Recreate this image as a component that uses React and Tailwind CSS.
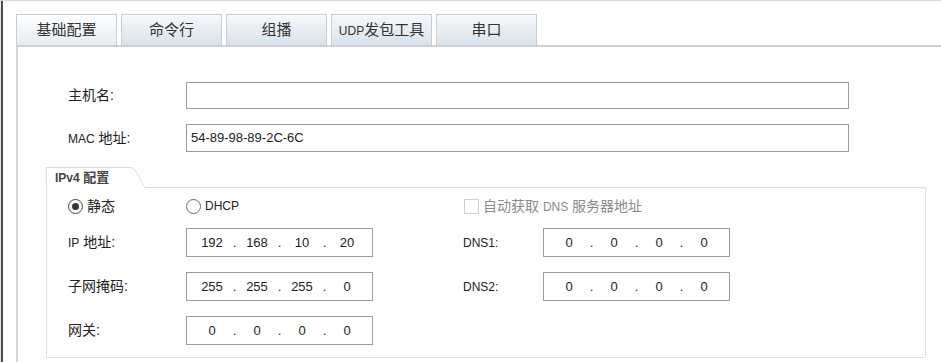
import React from "react";

const tabs = ["基础配置", "命令行", "组播", "UDP发包工具", "串口"];

function Tab({ label, active }) {
  return (
    <div
      className={`w-[101px] h-[31px] flex items-center justify-center border border-b-0 border-[#c7cdd3] text-[15px] text-[#333] bg-gradient-to-b ${
        active ? "from-white to-[#e6ecf1]" : "from-[#f6f8fa] to-[#d9e2ea]"
      }`}
    >
      {label === "UDP发包工具" ? (
        <span>
          <span className="text-[12px]">UDP</span>发包工具
        </span>
      ) : (
        label
      )}
    </div>
  );
}

function IpBox({ parts }) {
  return (
    <div className="w-[187px] h-[29px] border border-[#9c9c9c] flex items-center pl-[10px] text-[13px] text-[#222]">
      {parts.map((p, i) => (
        <React.Fragment key={i}>
          {i > 0 && <span className="w-[15px] text-center">.</span>}
          <span className="w-[30px] text-center">{p}</span>
        </React.Fragment>
      ))}
    </div>
  );
}

function Radio({ checked }) {
  return (
    <span
      className={`w-[15px] h-[15px] rounded-full border flex items-center justify-center bg-white ${
        checked ? "border-[#444]" : "border-[#666]"
      }`}
    >
      {checked && <span className="w-[7px] h-[7px] rounded-full bg-[#333]" />}
    </span>
  );
}

export default function App() {
  return (
    <div
      className="w-[941px] h-[362px] overflow-hidden bg-white border-t border-[#d9d9d9] flex text-[#222]"
      style={{ fontFamily: '"Liberation Sans", "Noto Sans CJK SC", sans-serif' }}
    >
      <div className="w-[1px] bg-[#e4e4e4]" />
      <div className="w-[2px] bg-[#4b4b4b]" />

      <div className="flex-1 pl-[13px] pt-[13px]">
        {/* tabs */}
        <div className="flex gap-[4px] border-b-2 border-[#d0d0d0]">
          {tabs.map((t, i) => (
            <Tab key={t} label={t} active={i === 0} />
          ))}
        </div>

        {/* panel */}
        <div className="border-l-2 border-[#d6d6d6] h-[400px] pl-[28px] pt-[35px]">
          <div className="pl-[22px]">
            <div className="flex items-center h-[27px]">
              <div className="w-[118px] text-[14px]">主机名:</div>
              <div className="w-[663px] h-[27px] border border-[#9c9c9c]" />
            </div>
            <div className="flex items-center h-[28px] mt-[15px]">
              <div className="w-[118px] text-[14px]">
                <span className="text-[12px]">MAC</span> 地址:
              </div>
              <div className="w-[663px] h-[28px] border border-[#9c9c9c] flex items-center pl-[4px] text-[13px]">
                54-89-98-89-2C-6C
              </div>
            </div>
          </div>

          {/* IPv4 group */}
          <div className="w-[880px] mt-[15px]">
            <div className="flex items-end h-[21px]">
              <div className="w-[84px] h-[21px] border-l border-t border-[#dcdcdc] pl-[8px] flex items-center font-bold text-[#444] text-[13px]">
                <span className="text-[12px]">IPv4</span>&nbsp;配置
              </div>
              <svg width="15" height="21" viewBox="0 0 15 21" className="block">
                <path d="M0 0.5 C6 0.5 8 10 15 20.5" fill="none" stroke="#dcdcdc" strokeWidth="1" />
              </svg>
              <div className="flex-1 h-[1px] bg-[#dcdcdc]" />
            </div>

            <div className="border-l border-r border-b border-[#e0e0e0] pl-[21px] pt-[8px] pb-[12px]">
              <div className="flex items-center h-[20px]">
                <div className="w-[118px] flex items-center gap-[4px] text-[14px]">
                  <Radio checked />
                  <span>静态</span>
                </div>
                <div className="w-[187px] flex items-center gap-[4px] text-[12px]">
                  <Radio />
                  <span>DHCP</span>
                </div>
                <div className="ml-[91px] flex items-center gap-[4px] text-[14px] text-[#8a8a8a]">
                  <span className="w-[15px] h-[15px] border border-[#cfcfcf] bg-white" />
                  <span>
                    自动获取 <span className="text-[12px]">DNS</span> 服务器地址
                  </span>
                </div>
              </div>

              <div className="flex items-center mt-[12px]">
                <div className="w-[118px] text-[14px]">
                  <span className="text-[12px]">IP</span> 地址:
                </div>
                <IpBox parts={["192", "168", "10", "20"]} />
                <div className="ml-[90px] w-[80px] text-[12px]">DNS1:</div>
                <IpBox parts={["0", "0", "0", "0"]} />
              </div>

              <div className="flex items-center mt-[15px]">
                <div className="w-[118px] text-[14px]">子网掩码:</div>
                <IpBox parts={["255", "255", "255", "0"]} />
                <div className="ml-[90px] w-[80px] text-[12px]">DNS2:</div>
                <IpBox parts={["0", "0", "0", "0"]} />
              </div>

              <div className="flex items-center mt-[15px]">
                <div className="w-[118px] text-[14px]">网关:</div>
                <IpBox parts={["0", "0", "0", "0"]} />
              </div>
            </div>
          </div>
        </div>
      </div>
    </div>
  );
}
